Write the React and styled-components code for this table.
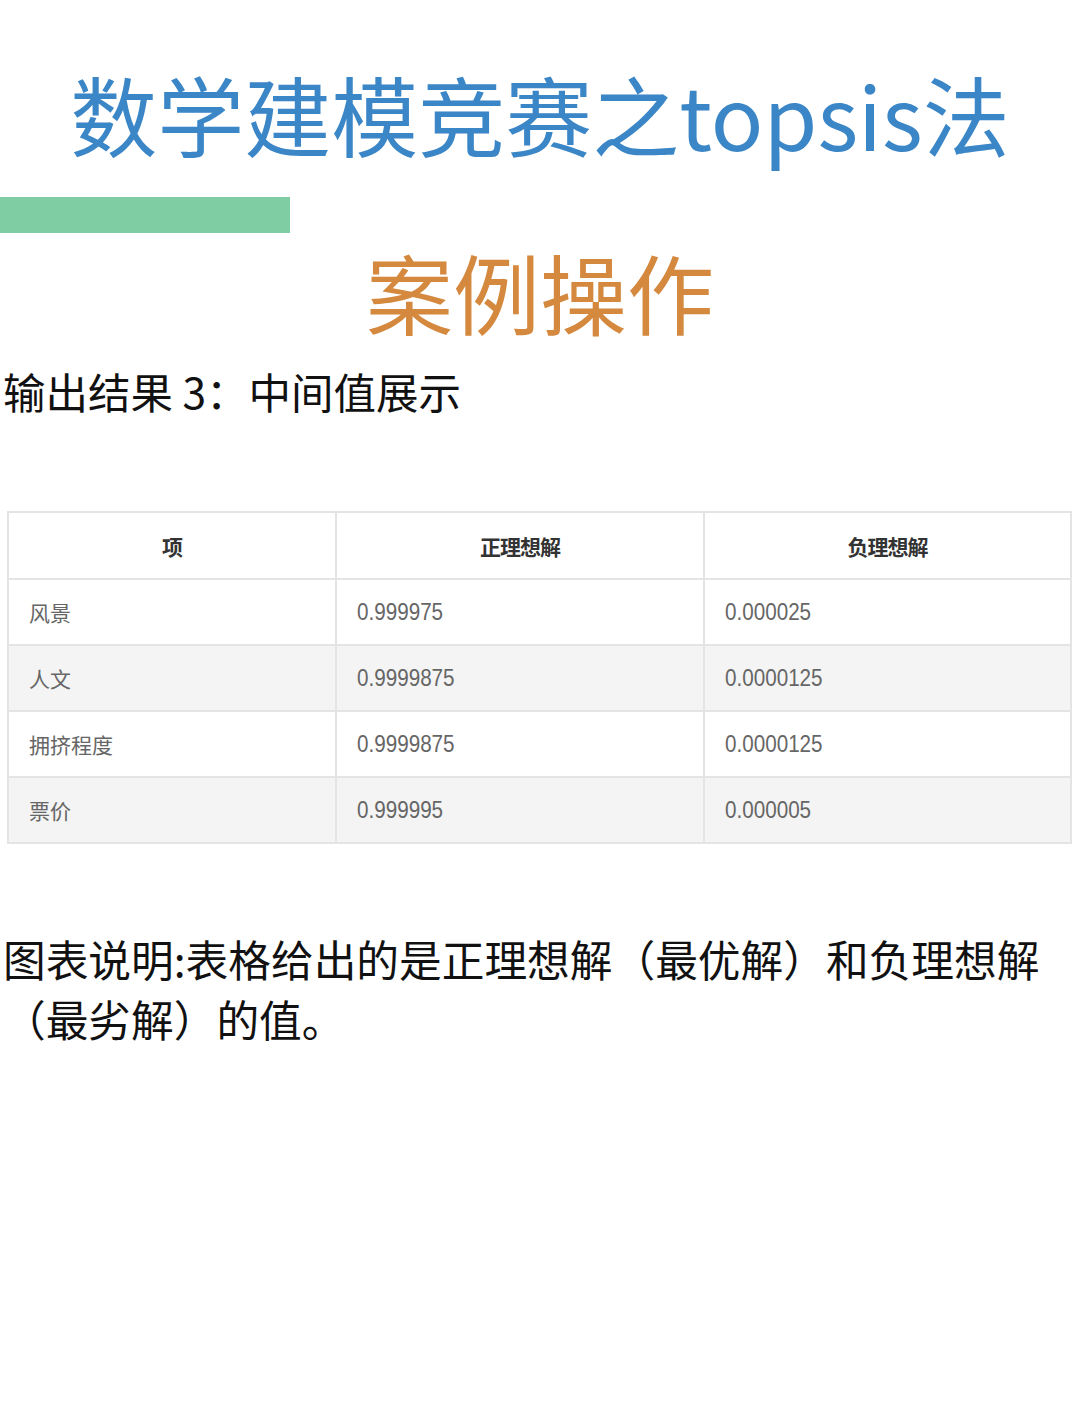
import React from "react";
import styled, { createGlobalStyle } from "styled-components";

const GlobalStyle = createGlobalStyle`
  body {
    margin: 0;
    background: #ffffff;
    font-family: "Noto Sans CJK SC", "Noto Sans", sans-serif;
  }
`;

const Page = styled.div`
  width: 1080px;
  height: 1410px;
  overflow: hidden;
  background: #fff;
  padding-top: 58px;
  box-sizing: border-box;
`;

const Title = styled.h1`
  margin: 0;
  text-align: center;
  font-size: 87px;
  font-weight: 400;
  line-height: 110px;
  color: ${(p) => p.color};
`;

const Bar = styled.div`
  width: 290px;
  height: 36px;
  margin: 29px 0 3px;
  background: #7ecda3;
`;

const Heading = styled.h2`
  margin: 17px 0 0;
  padding-left: 3px;
  font-size: 42.5px;
  font-weight: 400;
  line-height: 56px;
  color: #111;
`;

const Table = styled.table`
  margin: 92px 0 0 7px;
  width: 1065px;
  border-collapse: collapse;
  table-layout: fixed;
  font-family: "Liberation Sans", "Noto Sans CJK SC", sans-serif;
  border: 2px solid #ececec;
`;

const Th = styled.th`
  height: 65px;
  padding: 0 20px;
  font-size: 21px;
  font-weight: 700;
  color: #333;
  text-align: center;
  border: 2px solid #e4e4e4;
  letter-spacing: -1px;
`;

const Row = styled.tr`
  background: ${(p) => (p.$shade ? "#f4f4f4" : "#fff")};
`;

const Td = styled.td`
  height: 64px;
  padding: 0 20px;
  font-size: 21px;
  color: #666;
  text-align: left;
  border: 2px solid #e4e4e4;
`;

const Num = styled.span`
  display: inline-block;
  font-size: 24px;
  transform: scaleX(0.86);
  transform-origin: left center;
`;

const Caption = styled.p`
  margin: 84px 0 0;
  padding: 0 30px 0 3px;
  font-size: 42.7px;
  line-height: 60px;
  color: #111;
`;

const rows = [
  ["风景", "0.999975", "0.000025"],
  ["人文", "0.9999875", "0.0000125"],
  ["拥挤程度", "0.9999875", "0.0000125"],
  ["票价", "0.999995", "0.000005"],
];

export default function App() {
  return (
    <Page>
      <GlobalStyle />
      <Title color="#3b86c6">数学建模竞赛之topsis法</Title>
      <Bar />
      <Title color="#d4893f">案例操作</Title>
      <Heading>输出结果 3：中间值展示</Heading>
      <Table>
        <colgroup>
          <col style={{ width: 328 }} />
          <col style={{ width: 368 }} />
          <col />
        </colgroup>
        <thead>
          <tr>
            <Th>项</Th>
            <Th>正理想解</Th>
            <Th>负理想解</Th>
          </tr>
        </thead>
        <tbody>
          {rows.map((r, i) => (
            <Row key={i} $shade={i % 2 === 1}>
              <Td>{r[0]}</Td>
              <Td>
                <Num>{r[1]}</Num>
              </Td>
              <Td>
                <Num>{r[2]}</Num>
              </Td>
            </Row>
          ))}
        </tbody>
      </Table>
      <Caption>图表说明:表格给出的是正理想解（最优解）和负理想解（最劣解）的值。</Caption>
    </Page>
  );
}
